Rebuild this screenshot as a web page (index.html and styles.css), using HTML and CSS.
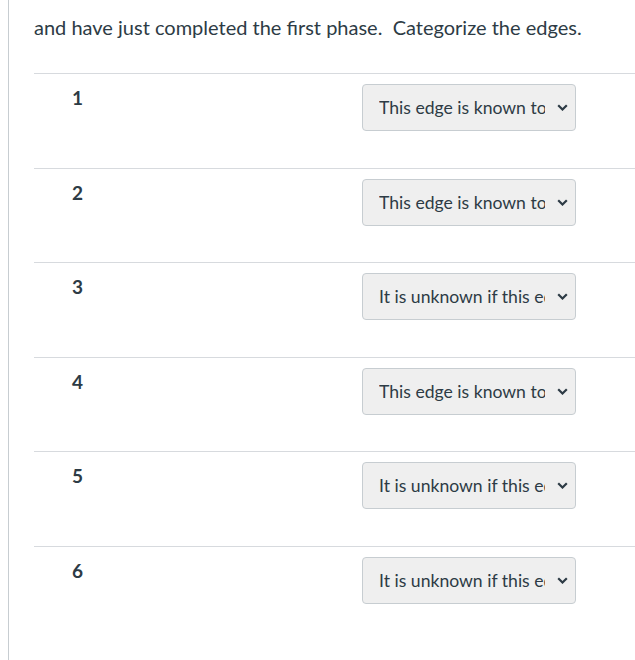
FILE: index.html
```html
<!DOCTYPE html>
<html>
<head>
<meta charset="utf-8">
<link rel="stylesheet" href="styles.css">
</head>
<body>
<div class="frame">
  <p class="intro">and have just completed the first phase.&nbsp; Categorize the edges.</p>
  <div class="rows">
    <div class="row">
      <div class="num">1</div>
      <div class="cell"><div class="select"><span class="val">This edge is known to be in the MST</span><svg class="chev" viewBox="0 0 11 7" width="11" height="7"><path d="M1.2 1.2 L5.5 5.5 L9.8 1.2" fill="none" stroke="#2d3b45" stroke-width="2.2"/></svg></div></div>
    </div>
    <div class="row">
      <div class="num">2</div>
      <div class="cell"><div class="select"><span class="val">This edge is known to be in the MST</span><svg class="chev" viewBox="0 0 11 7" width="11" height="7"><path d="M1.2 1.2 L5.5 5.5 L9.8 1.2" fill="none" stroke="#2d3b45" stroke-width="2.2"/></svg></div></div>
    </div>
    <div class="row">
      <div class="num">3</div>
      <div class="cell"><div class="select"><span class="val">It is unknown if this edge is in the MST</span><svg class="chev" viewBox="0 0 11 7" width="11" height="7"><path d="M1.2 1.2 L5.5 5.5 L9.8 1.2" fill="none" stroke="#2d3b45" stroke-width="2.2"/></svg></div></div>
    </div>
    <div class="row">
      <div class="num">4</div>
      <div class="cell"><div class="select"><span class="val">This edge is known to be in the MST</span><svg class="chev" viewBox="0 0 11 7" width="11" height="7"><path d="M1.2 1.2 L5.5 5.5 L9.8 1.2" fill="none" stroke="#2d3b45" stroke-width="2.2"/></svg></div></div>
    </div>
    <div class="row">
      <div class="num">5</div>
      <div class="cell"><div class="select"><span class="val">It is unknown if this edge is in the MST</span><svg class="chev" viewBox="0 0 11 7" width="11" height="7"><path d="M1.2 1.2 L5.5 5.5 L9.8 1.2" fill="none" stroke="#2d3b45" stroke-width="2.2"/></svg></div></div>
    </div>
    <div class="row">
      <div class="num">6</div>
      <div class="cell"><div class="select"><span class="val">It is unknown if this edge is in the MST</span><svg class="chev" viewBox="0 0 11 7" width="11" height="7"><path d="M1.2 1.2 L5.5 5.5 L9.8 1.2" fill="none" stroke="#2d3b45" stroke-width="2.2"/></svg></div></div>
    </div>
  </div>
</div>
</body>
</html>
```
FILE: styles.css
```css
html, body {
  margin: 0;
  padding: 0;
  background: #ffffff;
}
body {
  font-family: Lato, "Liberation Sans", sans-serif;
  color: #2d3b45;
}
.frame {
  margin-left: 8px;
  border-left: 1px solid #c7cdd1;
  padding-left: 25px;
  min-height: 660px;
  box-sizing: border-box;
  overflow: hidden;
}
.intro {
  margin: 0;
  padding-top: 12px;
  font-size: 20px;
  line-height: 30px;
  height: 61px;
}
.rows {
  display: flex;
  flex-direction: column;
}
.row {
  display: flex;
  border-top: 1px solid #d7dade;
  height: 94px;
  box-sizing: border-box;
}
.row:nth-child(odd) {
  height: 95px;
}
.num {
  width: 328px;
  padding-left: 38px;
  padding-top: 12px;
  font-size: 19px;
  font-weight: 700;
  line-height: 24px;
  box-sizing: border-box;
}
.cell {
  padding-top: 10px;
}
.select {
  display: flex;
  align-items: center;
  width: 214px;
  height: 47px;
  box-sizing: border-box;
  background: #efefef;
  border: 1px solid #c7cdd1;
  border-radius: 4px;
  padding: 0 7px 0 16px;
}
.val {
  flex: 1;
  overflow: hidden;
  white-space: nowrap;
  font-size: 17.6px;
  line-height: 22px;
  margin-right: 12px;
}
.chev {
  flex: none;
}
```
